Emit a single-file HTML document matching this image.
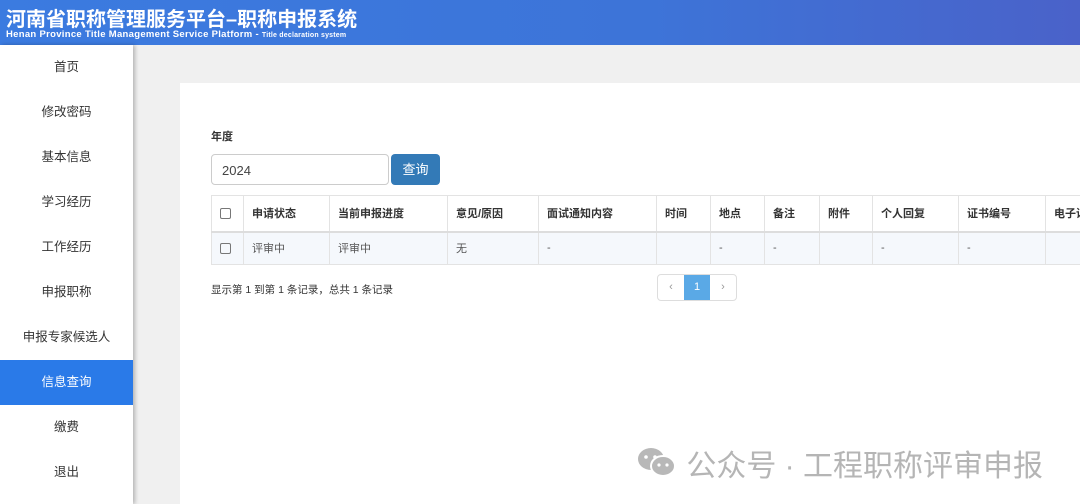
<!DOCTYPE html>
<html><head><meta charset="utf-8"><style>
*{margin:0;padding:0;box-sizing:border-box}
body{width:1080px;height:504px;overflow:hidden;background:#f0f0f0;font-family:"Liberation Sans","Noto Sans CJK SC",sans-serif;position:relative;color:#333}
.hd{position:absolute;left:0;top:0;width:1080px;height:45px;background:linear-gradient(90deg,#3b7be0,#3d74d8 60%,#4a62c9);color:#fff}
.hd .t1{position:absolute;left:6px;top:3px;font-size:20px;font-weight:bold;letter-spacing:0px;white-space:nowrap}
.hd .t2{position:absolute;left:6px;top:29px;font-size:9.5px;font-weight:bold;white-space:nowrap;letter-spacing:0.3px}
.hd .t2 small{font-size:7px;letter-spacing:0.2px}
.sb{position:absolute;left:0;top:45px;width:133px;height:459px;background:#fff;box-shadow:2px 0 4px rgba(0,0,0,.25)}
.sb div{height:45px;line-height:45px;text-align:center;font-size:12.5px;color:#333}
.sb .on{background:#2a7ae8;color:#fff}
.card{position:absolute;left:180px;top:83px;width:900px;height:421px;background:#fff}
.lbl{position:absolute;left:211px;top:128px;font-size:11px;font-weight:bold}
.inp{position:absolute;left:211px;top:154px;width:178px;height:31px;border:1px solid #ccc;border-radius:4px;font-size:13px;padding:8px 10px;color:#444}
.btn{position:absolute;left:391px;top:154px;width:49px;height:31px;background:#337ab7;border-radius:4px;color:#fff;font-size:13px;text-align:center;line-height:31px}
table{position:absolute;left:211px;top:195px;border-collapse:collapse;font-size:11px;table-layout:fixed;width:880px}
td,th{border:1px solid #e3e3e3;padding:0 8px;text-align:left;white-space:nowrap;overflow:hidden}
th{height:36px;font-weight:bold;border-bottom:2px solid #ddd}
tr.b td{height:33px;background:#f5f8fc;color:#555}
.cb{display:inline-block;width:11px;height:11px;border:1px solid #777;border-radius:2px;vertical-align:middle}
.info{position:absolute;left:211px;top:282px;font-size:10.5px;color:#333}
.pg{position:absolute;left:657px;top:274px;height:27px;display:flex;border:1px solid #ddd;border-radius:4px;overflow:hidden;font-size:11px}
.pg span{width:26px;text-align:center;line-height:25px;color:#999}
.pg .a{background:#5aa9e6;color:#fff;width:26px}
.wm{position:absolute;left:636px;top:441px;font-size:30px;color:#b5b5b5;white-space:nowrap;display:flex;align-items:center}
</style></head><body>
<div class="hd"><div class="t1">河南省职称管理服务平台–职称申报系统</div><div class="t2">Henan Province Title Management Service Platform - <small>Title declaration system</small></div></div>
<div class="sb"><div>首页</div><div>修改密码</div><div>基本信息</div><div>学习经历</div><div>工作经历</div><div>申报职称</div><div>申报专家候选人</div><div class="on">信息查询</div><div>缴费</div><div>退出</div></div>
<div class="card"></div>
<div class="lbl">年度</div>
<div class="inp">2024</div>
<div class="btn">查询</div>
<table>
<colgroup><col style="width:32px"><col style="width:86px"><col style="width:118px"><col style="width:91px"><col style="width:118px"><col style="width:54px"><col style="width:54px"><col style="width:55px"><col style="width:53px"><col style="width:86px"><col style="width:87px"><col style="width:46px"></colgroup>
<tr><th><span class="cb"></span></th><th>申请状态</th><th>当前申报进度</th><th>意见/原因</th><th>面试通知内容</th><th>时间</th><th>地点</th><th>备注</th><th>附件</th><th>个人回复</th><th>证书编号</th><th>电子证</th></tr>
<tr class="b"><td><span class="cb"></span></td><td>评审中</td><td>评审中</td><td>无</td><td>-</td><td></td><td>-</td><td>-</td><td></td><td>-</td><td>-</td><td></td></tr>
</table>
<div class="info">显示第 1 到第 1 条记录，总共 1 条记录</div>
<div class="pg"><span>‹</span><span class="a">1</span><span>›</span></div>
<div class="wm"><svg width="42" height="34" viewBox="0 0 42 34"><ellipse cx="15" cy="13" rx="13" ry="11" fill="#b8b8b8"/><ellipse cx="27" cy="20" rx="12" ry="10" fill="#b8b8b8" stroke="#fff" stroke-width="2"/><circle cx="10" cy="11" r="1.8" fill="#fff"/><circle cx="19" cy="11" r="1.8" fill="#fff"/><circle cx="23" cy="19" r="1.6" fill="#fff"/><circle cx="31" cy="19" r="1.6" fill="#fff"/></svg>&nbsp;公众号 · 工程职称评审申报</div>
</body></html>
